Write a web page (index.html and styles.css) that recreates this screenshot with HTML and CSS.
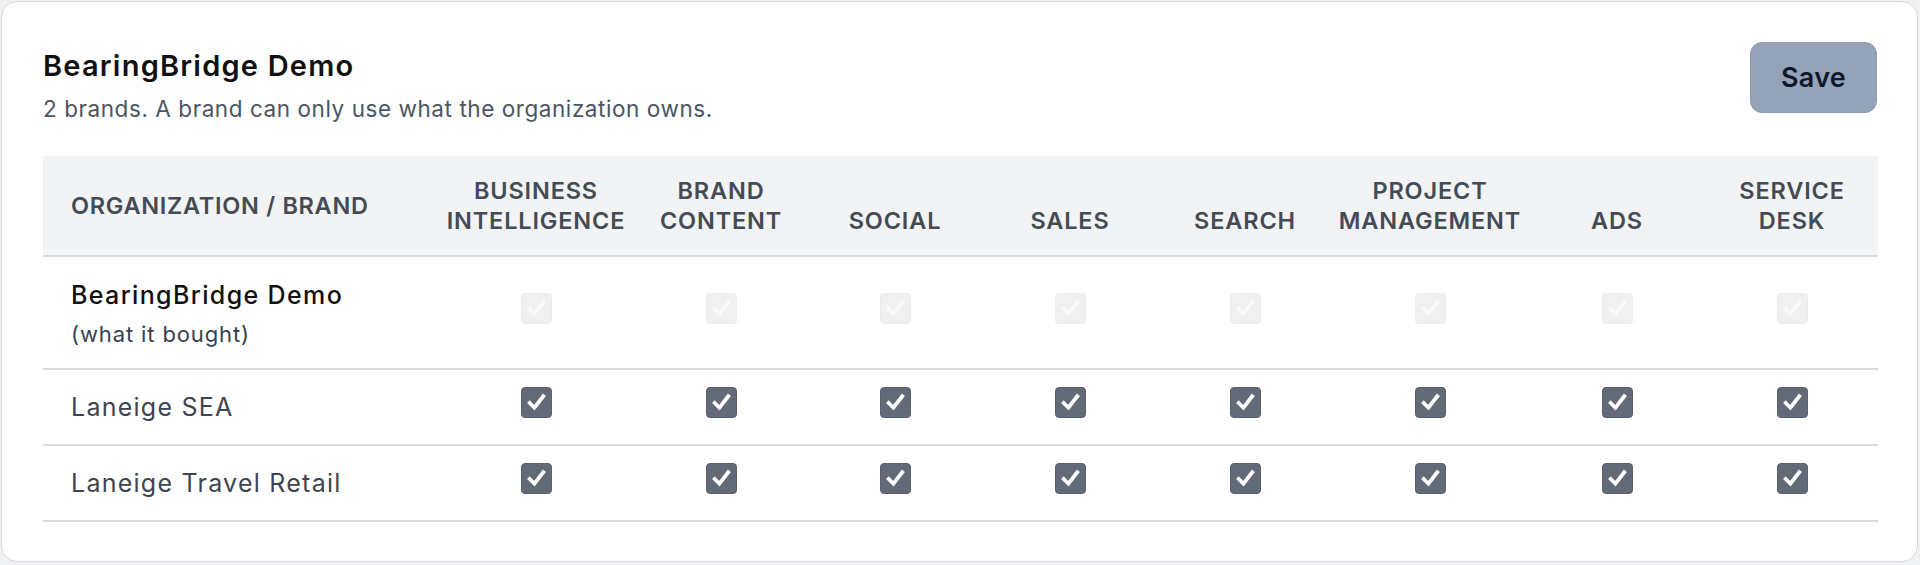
FILE: index.html
```html
<!DOCTYPE html>
<html lang="en">
<head>
<meta charset="utf-8">
<title>BearingBridge Demo</title>
<link rel="stylesheet" href="styles.css">
</head>
<body>
<section class="card">
  <header class="card-head">
    <div class="titles">
      <h1 class="title">BearingBridge Demo</h1>
      <p class="subtitle">2 brands. A brand can only use what the organization owns.</p>
    </div>
    <button class="save" type="button">Save</button>
  </header>

  <table class="matrix">
    <colgroup>
      <col class="c-name">
      <col class="c-wide">
      <col class="c-std">
      <col class="c-std">
      <col class="c-std2">
      <col class="c-std">
      <col class="c-wide">
      <col class="c-std3">
      <col class="c-last">
    </colgroup>
    <thead>
      <tr>
        <th class="h-name">Organization / Brand</th>
        <th>Business<br>Intelligence</th>
        <th>Brand<br>Content</th>
        <th>Social</th>
        <th>Sales</th>
        <th>Search</th>
        <th>Project<br>Management</th>
        <th>Ads</th>
        <th>Service<br>Desk</th>
      </tr>
    </thead>
    <tbody>
      <tr class="org-row">
        <td class="name">
          <div class="org-name">BearingBridge Demo</div>
          <div class="org-note">(what it bought)</div>
        </td>
        <td><span class="box off"><svg viewBox="0 0 24 24"><polyline points="5.5,12.5 10,17 18.5,6"/></svg></span></td>
        <td><span class="box off"><svg viewBox="0 0 24 24"><polyline points="5.5,12.5 10,17 18.5,6"/></svg></span></td>
        <td><span class="box off"><svg viewBox="0 0 24 24"><polyline points="5.5,12.5 10,17 18.5,6"/></svg></span></td>
        <td><span class="box off"><svg viewBox="0 0 24 24"><polyline points="5.5,12.5 10,17 18.5,6"/></svg></span></td>
        <td><span class="box off"><svg viewBox="0 0 24 24"><polyline points="5.5,12.5 10,17 18.5,6"/></svg></span></td>
        <td><span class="box off"><svg viewBox="0 0 24 24"><polyline points="5.5,12.5 10,17 18.5,6"/></svg></span></td>
        <td><span class="box off"><svg viewBox="0 0 24 24"><polyline points="5.5,12.5 10,17 18.5,6"/></svg></span></td>
        <td><span class="box off"><svg viewBox="0 0 24 24"><polyline points="5.5,12.5 10,17 18.5,6"/></svg></span></td>
      </tr>
      <tr>
        <td class="name brand">Laneige SEA</td>
        <td><span class="box on"><svg viewBox="0 0 24 24"><polyline points="5.5,12.5 10,17 18.5,6"/></svg></span></td>
        <td><span class="box on"><svg viewBox="0 0 24 24"><polyline points="5.5,12.5 10,17 18.5,6"/></svg></span></td>
        <td><span class="box on"><svg viewBox="0 0 24 24"><polyline points="5.5,12.5 10,17 18.5,6"/></svg></span></td>
        <td><span class="box on"><svg viewBox="0 0 24 24"><polyline points="5.5,12.5 10,17 18.5,6"/></svg></span></td>
        <td><span class="box on"><svg viewBox="0 0 24 24"><polyline points="5.5,12.5 10,17 18.5,6"/></svg></span></td>
        <td><span class="box on"><svg viewBox="0 0 24 24"><polyline points="5.5,12.5 10,17 18.5,6"/></svg></span></td>
        <td><span class="box on"><svg viewBox="0 0 24 24"><polyline points="5.5,12.5 10,17 18.5,6"/></svg></span></td>
        <td><span class="box on"><svg viewBox="0 0 24 24"><polyline points="5.5,12.5 10,17 18.5,6"/></svg></span></td>
      </tr>
      <tr>
        <td class="name brand">Laneige Travel Retail</td>
        <td><span class="box on"><svg viewBox="0 0 24 24"><polyline points="5.5,12.5 10,17 18.5,6"/></svg></span></td>
        <td><span class="box on"><svg viewBox="0 0 24 24"><polyline points="5.5,12.5 10,17 18.5,6"/></svg></span></td>
        <td><span class="box on"><svg viewBox="0 0 24 24"><polyline points="5.5,12.5 10,17 18.5,6"/></svg></span></td>
        <td><span class="box on"><svg viewBox="0 0 24 24"><polyline points="5.5,12.5 10,17 18.5,6"/></svg></span></td>
        <td><span class="box on"><svg viewBox="0 0 24 24"><polyline points="5.5,12.5 10,17 18.5,6"/></svg></span></td>
        <td><span class="box on"><svg viewBox="0 0 24 24"><polyline points="5.5,12.5 10,17 18.5,6"/></svg></span></td>
        <td><span class="box on"><svg viewBox="0 0 24 24"><polyline points="5.5,12.5 10,17 18.5,6"/></svg></span></td>
        <td><span class="box on"><svg viewBox="0 0 24 24"><polyline points="5.5,12.5 10,17 18.5,6"/></svg></span></td>
      </tr>
    </tbody>
  </table>
</section>
</body>
</html>
```

FILE: styles.css
```css
* { box-sizing: border-box; }

html, body {
  margin: 0;
  background: #f0f1f2;
}

body {
  padding: 1px 2px 3px 1px;
  font-family: Inter, "Noto Sans", "Liberation Sans", sans-serif;
  color: #111827;
}

.card {
  background: #ffffff;
  border: 1px solid #d6d8dc;
  border-radius: 16px;
  padding: 40px 40px 39px 41px;
}

.card-head {
  display: flex;
  justify-content: space-between;
  align-items: flex-start;
  margin-bottom: 32px;
}

.title {
  margin: 0;
  font-size: 29px;
  line-height: 47px;
  font-weight: 600;
  letter-spacing: 0.042em;
  color: #111111;
}

.subtitle {
  margin: 5px 0 0;
  font-size: 22.5px;
  line-height: 30px;
  letter-spacing: 0.025em;
  color: #4b5563;
}

.save {
  width: 127px;
  height: 71px;
  border: 1px solid #8e9bb0;
  border-radius: 12px;
  background: #94a3b8;
  color: #0f172a;
  font-family: inherit;
  font-size: 27px;
  font-weight: 600;
  letter-spacing: 0.01em;
}

.matrix {
  width: 100%;
  table-layout: fixed;
  border-collapse: collapse;
}

.c-name { width: 395px; }
.c-wide { width: 196px; }
.c-std  { width: 174px; }
.c-std2 { width: 176px; }
.c-std3 { width: 178px; }
.c-last { width: 172px; }

.matrix thead tr {
  background: #f1f3f5;
  border-bottom: 2px solid #d6d9dd;
}

.matrix th {
  padding: 20px 0 19px;
  font-size: 23.5px;
  line-height: 30px;
  font-weight: 600;
  letter-spacing: 0.036em;
  text-transform: uppercase;
  color: #454b54;
  text-align: center;
  vertical-align: bottom;
}

.matrix th.h-name {
  text-align: left;
  vertical-align: middle;
  padding-left: 28px;
  letter-spacing: 0.03em;
}

.matrix tbody tr {
  border-bottom: 2px solid #d9dbdf;
}

.matrix td {
  text-align: center;
  vertical-align: middle;
  padding: 0;
  height: 76px;
}

.matrix tr.org-row td {
  height: 113px;
}

.matrix td.name {
  text-align: left;
  padding-left: 28px;
}

.org-name {
  font-size: 25px;
  line-height: 34px;
  font-weight: 500;
  letter-spacing: 0.055em;
  color: #111111;
}

.org-note {
  margin-top: 8px;
  font-size: 22px;
  line-height: 28px;
  letter-spacing: 0.04em;
  color: #374151;
}

.brand {
  font-size: 25px;
  letter-spacing: 0.05em;
  color: #3f4550;
}

.box {
  display: flex;
  width: 31px;
  height: 31px;
  margin: 0 auto 9px;
  border-radius: 4px;
  align-items: center;
  justify-content: center;
}

.box svg {
  width: 25px;
  height: 25px;
  fill: none;
  stroke: #ffffff;
  stroke-width: 3.6;
  stroke-linecap: square;
  stroke-linejoin: miter;
}

.box.on {
  background: #626a77;
  border: 1px solid #58606c;
}

.box.off {
  background: #f0f0f1;
  border: 1px solid #ececee;
}

.box.off svg {
  stroke: #fafafa;
}
```
